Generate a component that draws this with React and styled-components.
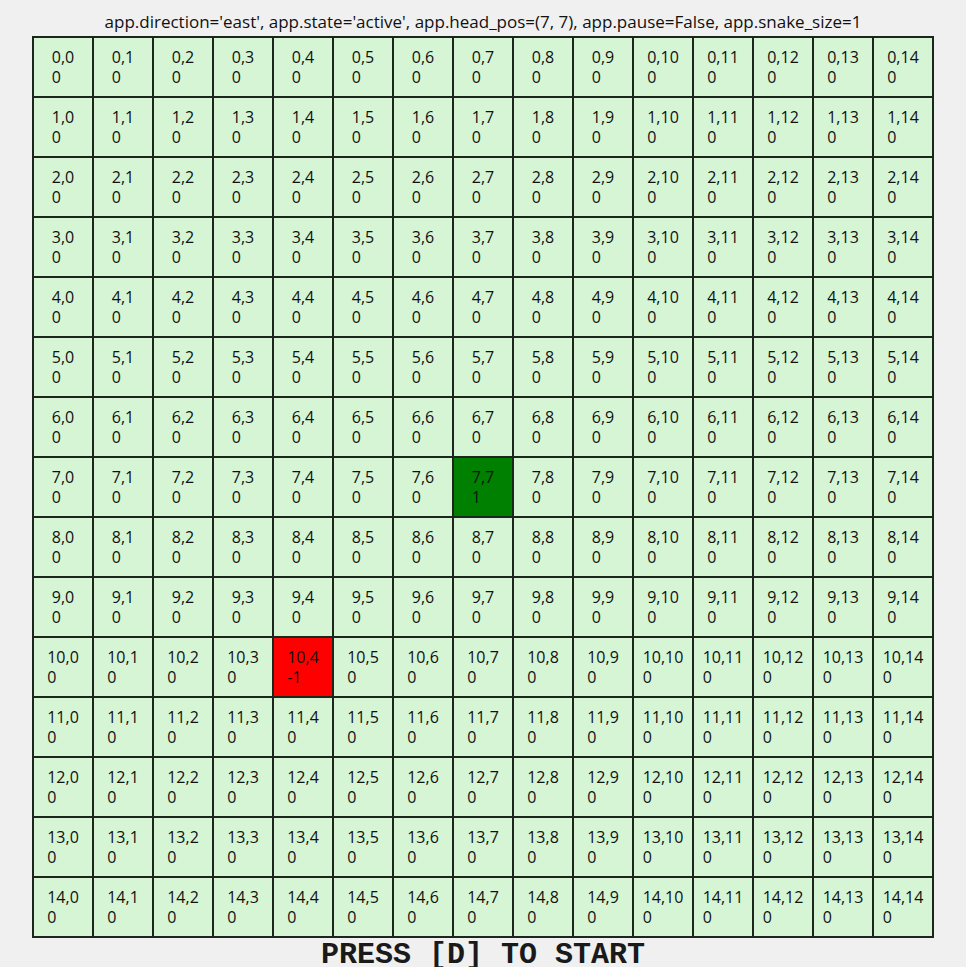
import React from "react";
import styled, { createGlobalStyle } from "styled-components";

const SIZE = 15;
const HEAD = [7, 7];
const FOOD = [10, 4];

const GlobalStyle = createGlobalStyle`
  html, body {
    margin: 0;
    padding: 0;
    background: #f0f0f0;
  }
`;

const Page = styled.div`
  width: 966px;
  height: 967px;
  display: flex;
  flex-direction: column;
  align-items: center;
  overflow: hidden;
  font-family: "Open Sans", "Noto Sans", sans-serif;
  color: #000;
`;

const Status = styled.div`
  padding-top: 12px;
  height: 20px;
  line-height: 20px;
  font-size: 17px;
  margin-bottom: 4px;
  white-space: nowrap;
  color: #111;
`;

const Board = styled.div`
  display: grid;
  grid-template-columns: repeat(${SIZE}, 58px);
  grid-auto-rows: 58px;
  gap: 2px;
  padding: 2px;
  background: #1c261c;
`;

const cellColors = {
  empty: "#d5f5d5",
  head: "#008000",
  food: "#ff0000",
};

const Cell = styled.div`
  display: flex;
  align-items: center;
  justify-content: center;
  background: ${({ $kind }) => cellColors[$kind]};
`;

const Label = styled.div`
  font-size: 16px;
  line-height: 20px;
  text-align: left;
  color: #111;
`;

const Prompt = styled.div`
  margin-top: 2px;
  height: 30px;
  line-height: 30px;
  font-family: "Liberation Mono", "Courier New", monospace;
  font-weight: bold;
  font-size: 30px;
  color: #1a1a1a;
  white-space: pre;
`;

const App = () => {
  const rows = [];
  for (let r = 0; r < SIZE; r++) {
    for (let c = 0; c < SIZE; c++) {
      let kind = "empty";
      let value = 0;
      if (r === HEAD[0] && c === HEAD[1]) {
        kind = "head";
        value = 1;
      } else if (r === FOOD[0] && c === FOOD[1]) {
        kind = "food";
        value = -1;
      }
      rows.push(
        <Cell key={`${r}-${c}`} $kind={kind}>
          <Label>
            {r},{c}
            <br />
            {value}
          </Label>
        </Cell>
      );
    }
  }

  return (
    <>
      <GlobalStyle />
      <Page>
        <Status>
          app.direction='east', app.state='active', app.head_pos=(7, 7), app.pause=False, app.snake_size=1
        </Status>
        <Board>{rows}</Board>
        <Prompt>PRESS [D] TO START</Prompt>
      </Page>
    </>
  );
};

export default App;
